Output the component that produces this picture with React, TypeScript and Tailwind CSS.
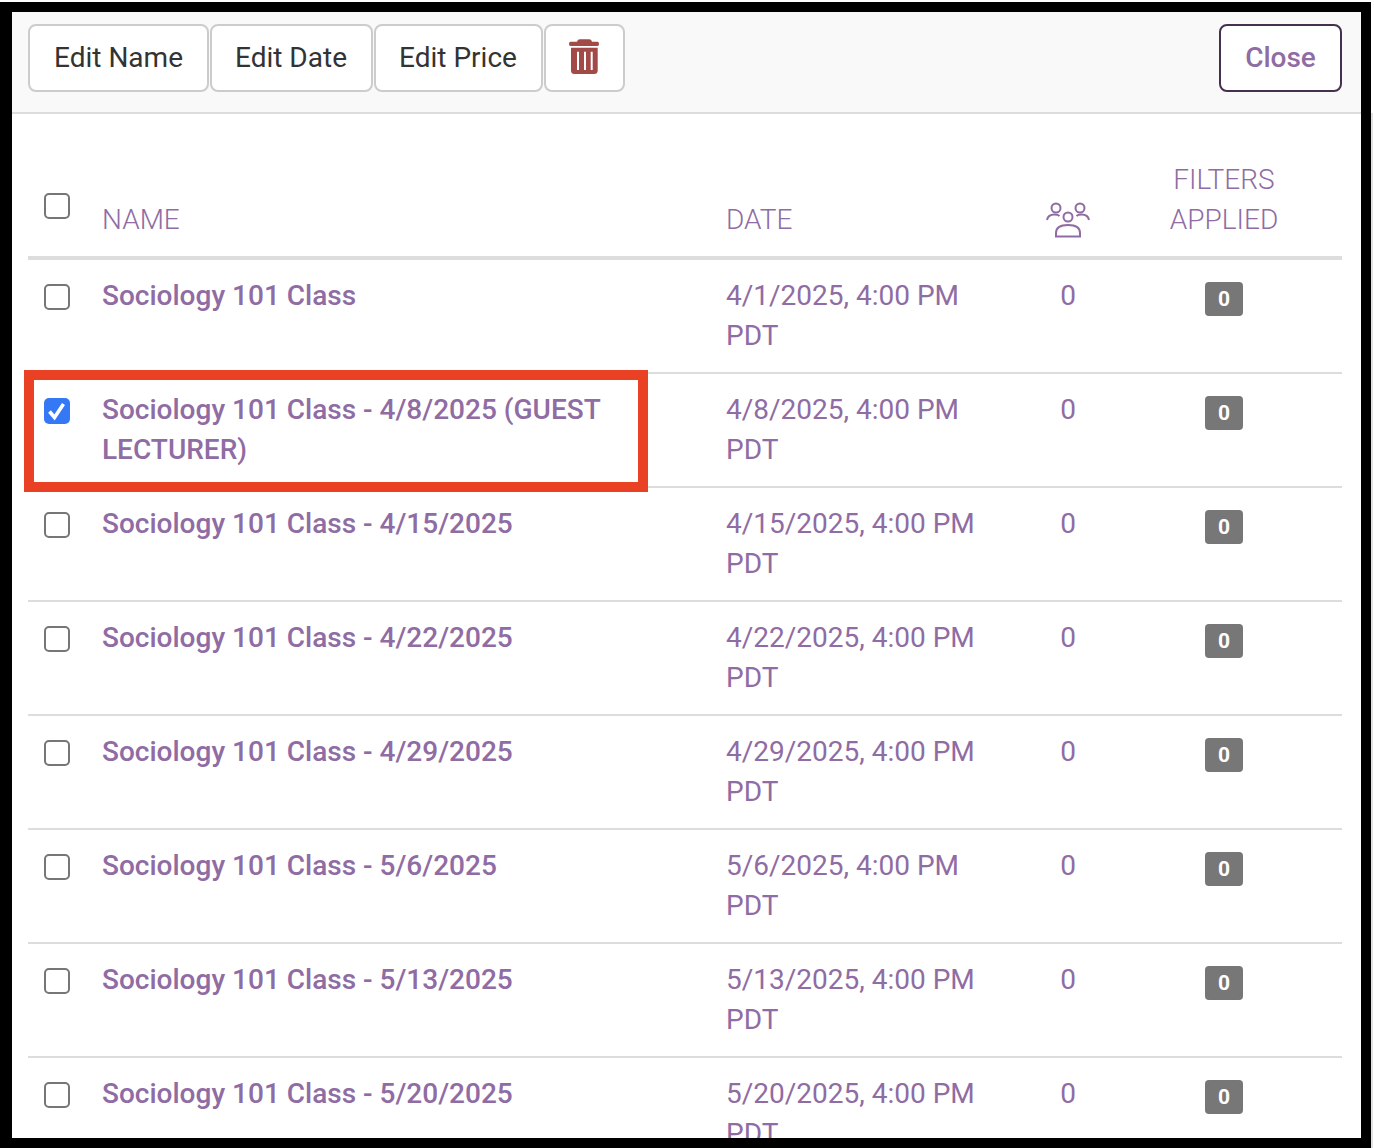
import React from "react";

const rows = [
  { name: "Sociology 101 Class", date: "4/1/2025, 4:00 PM PDT" },
  { name: "Sociology 101 Class - 4/8/2025 (GUEST LECTURER)", date: "4/8/2025, 4:00 PM PDT", checked: true },
  { name: "Sociology 101 Class - 4/15/2025", date: "4/15/2025, 4:00 PM PDT" },
  { name: "Sociology 101 Class - 4/22/2025", date: "4/22/2025, 4:00 PM PDT" },
  { name: "Sociology 101 Class - 4/29/2025", date: "4/29/2025, 4:00 PM PDT" },
  { name: "Sociology 101 Class - 5/6/2025", date: "5/6/2025, 4:00 PM PDT" },
  { name: "Sociology 101 Class - 5/13/2025", date: "5/13/2025, 4:00 PM PDT" },
  { name: "Sociology 101 Class - 5/20/2025", date: "5/20/2025, 4:00 PM PDT" },
];

function Check({ checked }: { checked?: boolean }) {
  if (checked) {
    return (
      <span className="flex h-[26px] w-[26px] items-center justify-center rounded-[5px] bg-[#3478f6]">
        <svg width="20" height="20" viewBox="0 0 20 20">
          <path d="M2.5 10.5 L7.5 16.5 L16.5 3" fill="none" stroke="#fff" strokeWidth="3.6" />
        </svg>
      </span>
    );
  }
  return <span className="block h-[26px] w-[26px] rounded-[5px] border-2 border-[#767676] bg-white" />;
}

function Trash() {
  return (
    <svg width="30" height="35" viewBox="0 0 30 35" className="mb-[3px]">
      <path d="M8 2.7 Q8.5 0.3 11 0.3 H20 Q22.5 0.3 23 2.7 H28.5 Q30 2.7 30 4.9 Q30 7 28.5 7 H1.5 Q0 7 0 4.9 Q0 2.7 1.5 2.7 Z" fill="#a24a48" />
      <path fillRule="evenodd" d="M2 8.7 H28.7 V31.5 Q28.7 35 25 35 H5.5 Q2 35 2 31.5 Z M8 12.7 V31 H10 V12.7 Z M15 12.7 V31 H17 V12.7 Z M21.7 12.7 V31 H23.7 V12.7 Z" fill="#a24a48" />
    </svg>
  );
}

function People() {
  return (
    <svg width="44" height="36" viewBox="0 0 44 36" fill="none" stroke="#8f6ca3" strokeWidth="2">
      <circle cx="10" cy="6" r="4.5" />
      <circle cx="34" cy="6" r="4.5" />
      <circle cx="22" cy="15" r="4.5" />
      <path d="M1 18 Q2 12.5 8.5 12.5 Q12 12.5 13.5 14" />
      <path d="M43 18 Q42 12.5 35.5 12.5 Q32 12.5 30.5 14" />
      <path d="M10 34.5 V31 Q10 23 22 23 Q34 23 34 31 V34.5 Z" />
    </svg>
  );
}

const btn = "flex h-[68px] items-center justify-center rounded-[8px] border-2 border-[#cccccc] bg-white text-[28px] text-[#333333]";
const grid = "grid grid-cols-[74px_624px_304px_76px_236px]";

export default function App() {
  return (
    <div className="flex h-[1148px] w-[1374px] overflow-hidden bg-white pt-[2px] font-['Roboto',sans-serif]">
      <div className="h-[1146px] w-[1371px] shrink-0 overflow-hidden border-[10px] border-l-[12px] border-black bg-white">
        <div className="flex h-[102px] items-start justify-between border-b-2 border-[#dddddd] bg-[#f9f9f9] pl-[16px] pr-[19px] pt-[12px]">
          <div className="flex gap-[1px]">
            <button className={`${btn} w-[181px]`}>Edit Name</button>
            <button className={`${btn} w-[163px] pr-[1px]`}>Edit Date</button>
            <button className={`${btn} w-[169px] pr-[1px]`}>Edit Price</button>
            <button className={`${btn} w-[81px] pr-[1px]`}><Trash /></button>
          </div>
          <button className="flex h-[68px] w-[123px] items-center justify-center rounded-[8px] border-2 border-[#46304f] bg-white text-[28px] font-medium text-[#8f6ca3]">Close</button>
        </div>

        <div className="relative ml-[16px] w-[1314px] text-[28px] leading-[40px] text-[#8f6ca3]">
          <div className={`${grid} h-[146px] items-end border-b-4 border-[#dddddd] pb-[16px]`}>
            <div className="mb-[21px] pl-[16px]"><Check /></div>
            <div className="font-light">NAME</div>
            <div className="font-light">DATE</div>
            <div className="flex justify-center pb-[2px]"><People /></div>
            <div className="text-center font-light">FILTERS<br />APPLIED</div>
          </div>
          {rows.map((r) => (
            <div key={r.name} className={`${grid} h-[114px] border-b-2 border-[#dddddd] pt-[16px]`}>
              <div className="pl-[16px] pt-[8px]"><Check checked={r.checked} /></div>
              <div className="pr-[90px] font-medium">{r.name}</div>
              <div className="pr-[40px]">{r.date}</div>
              <div className="text-center">0</div>
              <div className="flex justify-center pt-[6px]">
                <span className="flex h-[34px] w-[38px] items-center justify-center rounded-[4px] bg-[#777777] text-[21px] font-bold leading-none text-white">0</span>
              </div>
            </div>
          ))}
          <div className="absolute left-[-4px] top-[256px] h-[122px] w-[624px] border-[10px] border-[#ea4024]" />
        </div>
      </div>
      <div className="mt-[111px] w-[2px] bg-[#e2e2e2]" />
    </div>
  );
}
